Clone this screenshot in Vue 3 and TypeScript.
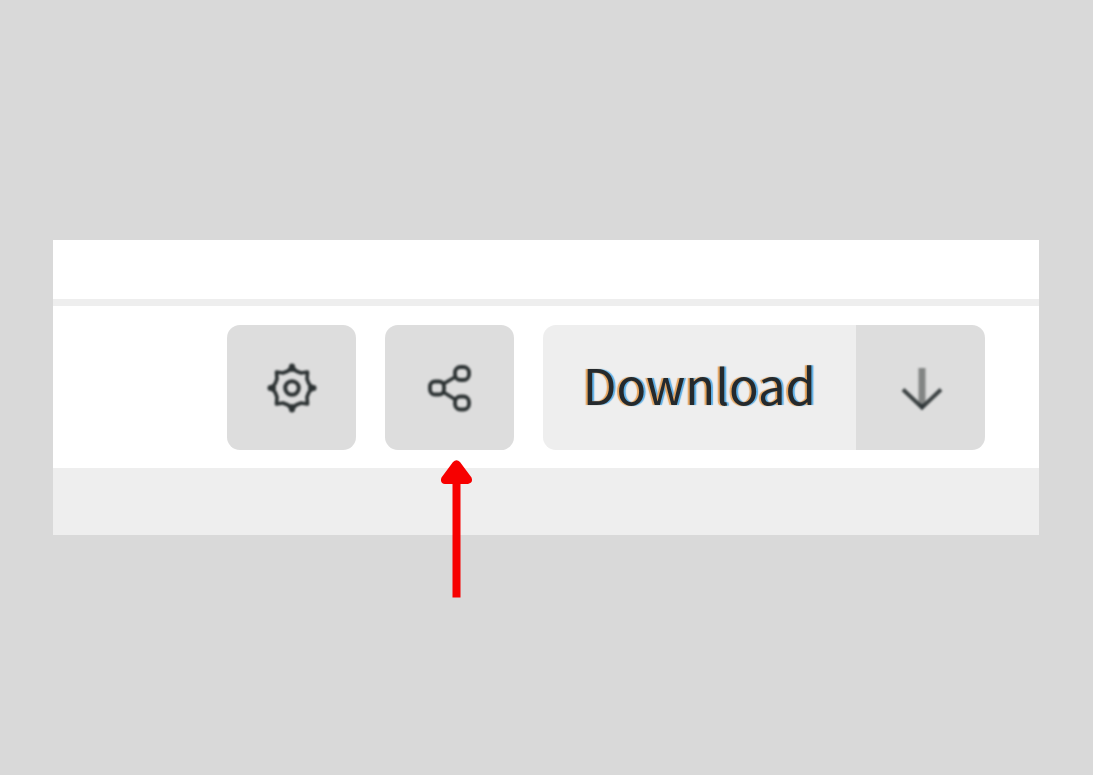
<script setup lang="ts">
const label: string = 'Download'
</script>

<template>
  <main class="stage">
    <section class="panel">
      <div class="top"></div>
      <div class="toolbar">
        <button class="btn" type="button" aria-label="Settings">
          <svg class="icon" width="54" height="54" viewBox="-27 -27 54 54" fill="none" stroke="#2c3233" stroke-width="3.6" stroke-linejoin="round">
            <path d="M0-21.5 4-17 9-15 15.500-16 15-9 17-4 21.500 0 17 4 15 9 15.500 16 9 15 4 17 0 21.500-4 17-9 15-15.500 16-15 9-17 4-21.500 0-17-4-15-9-15.500-16-9-15-4-17Z" />
            <circle r="6.800" stroke-width="4" />
            <path d="M0-21.500v2.500M0 21.500v-2.500M-21.500 0h2.500M21.500 0h-2.500" stroke-width="6" stroke-linecap="round" />
          </svg>
        </button>
        <div class="share">
          <button class="btn" type="button" aria-label="Share">
            <svg class="icon" width="54" height="54" viewBox="-27 -27 54 54" fill="none" stroke="#2c3233" stroke-width="3.8">
              <rect x="-20" y="-6.500" width="14" height="13" rx="5" />
              <rect x="5" y="-21" width="14" height="13" rx="5.500" />
              <rect x="5" y="8.500" width="14" height="13" rx="5.500" />
              <path d="M-6-4.500 6-11.500M-6 4.500 6 12" stroke-width="3.4" />
            </svg>
          </button>
          <svg class="pointer" width="32" height="138" viewBox="0 0 32 138" fill="#f70000" aria-hidden="true">
            <path d="M12 2Q15.500-1.500 19 2L30.500 17.500Q32.500 23 27 24H19.500V137.500H11.500V24H4Q-1.500 23 .5 17.500Z" />
          </svg>
        </div>
        <div class="split">
          <button class="download" type="button">{{ label }}</button>
          <button class="btn more" type="button" aria-label="Download options">
            <svg class="icon" width="54" height="54" viewBox="-27 -27 54 54" fill="none">
              <path d="M0-20V19" stroke="#828584" stroke-width="7" />
              <path d="M-19 1.500 0 19.500 19 1.500" stroke="#3c4243" stroke-width="4" />
              <path d="M-4 16 0 22 4 16Z" fill="#30383a" />
            </svg>
          </button>
        </div>
      </div>
      <div class="bottom"></div>
    </section>
  </main>
</template>

<style>
body {
  margin: 0;
  background: #d9d9d9;
}
</style>

<style scoped>
.stage {
  min-height: 100vh;
  box-sizing: border-box;
  padding: 0 54px 0 53px;
  display: flex;
  align-items: center;
  background: #d9d9d9;
}
.panel {
  flex: 1;
  background: #fff;
}
.top {
  height: 59px;
  border-bottom: 7px solid #eee;
}
.toolbar {
  display: flex;
  justify-content: flex-end;
  gap: 29px;
  padding: 19px 54px 18px;
}
.btn {
  display: flex;
  align-items: center;
  justify-content: center;
  width: 129px;
  height: 125px;
  padding: 0 0 0 2px;
  border: 0;
  border-radius: 13px;
  background: #ddd;
}
.icon {
  filter: blur(1px);
}
.share {
  position: relative;
}
.pointer {
  position: absolute;
  left: 56px;
  top: 135px;
}
.split {
  display: flex;
  border-radius: 13px;
  overflow: hidden;
}
.download {
  padding: 0 40px 8px;
  border: 0;
  background: #eee;
  color: #24292d;
  font: 400 49px/72px "Noto Sans CJK SC", sans-serif;
  text-shadow: -2px 0 1px #e6a45c, 2px 0 1px #5caee6;
}
.more {
  border-radius: 0;
}
.bottom {
  height: 67px;
  background: #eee;
}
</style>
